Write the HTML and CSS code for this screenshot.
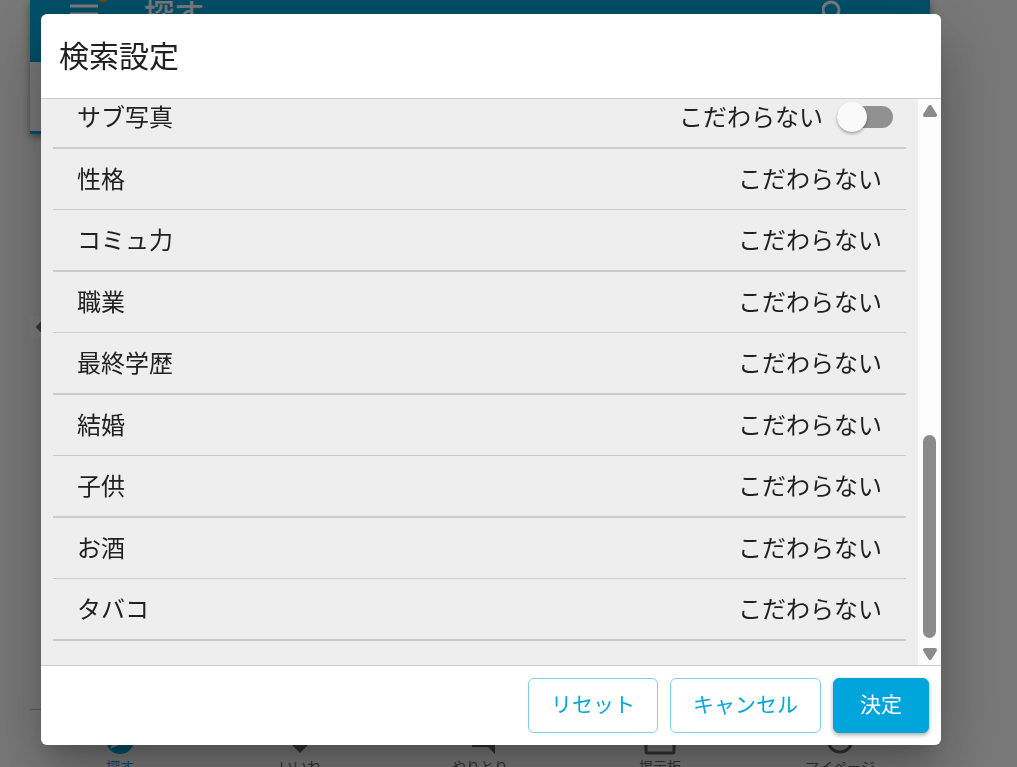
FILE: index.html
```
<!DOCTYPE html>
<html lang="ja">
<head>
<meta charset="utf-8">
<title>検索設定</title>
<link rel="stylesheet" href="styles.css">
</head>
<body>
<div class="app">
  <header class="topbar">
    <span class="menu"><svg width="36" height="28" viewBox="0 0 36 28"><path d="M4 6h28M4 14h28M4 22h28" stroke="#fff" stroke-width="3"/><circle cx="37" cy="-4" r="6" fill="#f90"/></svg></span>
    <span class="topbar-title">探す</span>
    <svg width="28" height="28" viewBox="0 0 28 28"><circle cx="9" cy="10" r="8" fill="none" stroke="#fff" stroke-width="3"/><path d="M15 16l9 9" stroke="#fff" stroke-width="3"/></svg>
  </header>
  <div class="tabs"></div>
  <main class="content">
    <span class="handle"><svg width="11" height="22" viewBox="0 0 11 22"><path d="M7 11l4-4v8z" fill="#777" stroke="#777" stroke-width="2" stroke-linejoin="round"/></svg></span>
  </main>
  <nav class="bottom">
    <a class="tab tab-active" href="#"><svg width="36" height="36" viewBox="0 0 36 36"><circle cx="18" cy="20" r="14" fill="currentColor"/><path d="M8 29l6-13 13-6-6 13z" fill="#eee"/></svg>探す</a>
    <a class="tab" href="#"><svg width="36" height="36" viewBox="0 0 36 36"><path d="M18 33L5 20C-1 11 11 1 18 11c7-10 19 0 13 9z" fill="currentColor"/></svg>いいね</a>
    <a class="tab" href="#"><svg width="36" height="36" viewBox="0 0 36 36"><path d="M3 4h24v16H3zM30 9h3v25l-7-7H10v-4h20z" fill="currentColor"/></svg>やりとり</a>
    <a class="tab" href="#"><svg width="36" height="36" viewBox="0 0 36 36"><rect x="4" y="6" width="28" height="27" rx="2" fill="none" stroke="currentColor" stroke-width="3"/></svg>掲示板</a>
    <a class="tab" href="#"><svg width="36" height="36" viewBox="0 0 36 36"><circle cx="18" cy="20" r="12" fill="none" stroke="currentColor" stroke-width="3"/></svg>マイページ</a>
  </nav>
</div>

<div class="backdrop">
  <section class="dialog" role="dialog" aria-labelledby="title">
    <h1 class="title" id="title">検索設定</h1>
    <div class="body">
      <div class="list">
        <div class="row row-switch"><label class="name" for="photo">サブ写真</label><span class="value">こだわらない</span><input class="switch" type="checkbox" id="photo"></div>
        <div class="row"><span class="name">性格</span><span class="value">こだわらない</span></div>
        <div class="row"><span class="name">コミュ力</span><span class="value">こだわらない</span></div>
        <div class="row"><span class="name">職業</span><span class="value">こだわらない</span></div>
        <div class="row"><span class="name">最終学歴</span><span class="value">こだわらない</span></div>
        <div class="row"><span class="name">結婚</span><span class="value">こだわらない</span></div>
        <div class="row"><span class="name">子供</span><span class="value">こだわらない</span></div>
        <div class="row"><span class="name">お酒</span><span class="value">こだわらない</span></div>
        <div class="row"><span class="name">タバコ</span><span class="value">こだわらない</span></div>
      </div>
      <div class="scrollbar" aria-hidden="true">
        <svg width="16" height="12" viewBox="0 0 16 12"><path d="M8 2L13 10H3z" fill="#8b8b8b" stroke="#8b8b8b" stroke-width="4" stroke-linejoin="round"/></svg>
        <div class="track"><div class="thumb"></div></div>
        <svg width="16" height="12" viewBox="0 0 16 12"><path d="M8 10L3 2h10z" fill="#8b8b8b" stroke="#8b8b8b" stroke-width="4" stroke-linejoin="round"/></svg>
      </div>
    </div>
    <footer class="actions">
      <button class="btn" type="button">リセット</button>
      <button class="btn" type="button">キャンセル</button>
      <button class="btn btn-primary" type="button">決定</button>
    </footer>
  </section>
</div>
</body>
</html>
```
FILE: styles.css
```
* { box-sizing: border-box; }
body {
  margin: 0;
  background: #fafafa;
  color: #212121;
  font-family: "Noto Sans CJK JP", sans-serif;
  overflow: hidden;
}
svg { display: block; flex: none; }

.app {
  display: flex;
  flex-direction: column;
  height: 100vh;
  margin: 0 87px 0 30px;
}
.topbar {
  display: flex;
  align-items: flex-start;
  height: 62px;
  padding: 0 80px 0 36px;
  background: #00a6db;
  color: #fff;
  box-shadow: 0 3px 8px rgba(0, 0, 0, .4);
}
.menu svg { overflow: visible; }
.topbar-title {
  flex: 1;
  padding-left: 42px;
  font-size: 30px;
  font-weight: 500;
  line-height: 24px;
}
.tabs {
  height: 72px;
  border-bottom: 3px solid #00a6db;
  background: #fafafa;
  box-shadow: 0 3px 8px rgba(0, 0, 0, .4);
}
.content {
  display: flex;
  flex: 1;
  align-items: flex-start;
  padding-top: 182px;
}
.handle { background: #fff; }
.bottom {
  display: grid;
  grid-template-columns: repeat(5, 1fr);
  height: 58px;
  border-top: 1px solid #bbb;
  background: #fafafa;
}
.tab {
  display: flex;
  flex-direction: column;
  align-items: center;
  padding-top: 10px;
  color: #666;
  font-size: 14px;
  line-height: 20px;
  text-decoration: none;
}
.tab-active { color: #00a6db; }

.backdrop {
  position: fixed;
  inset: 0;
  display: flex;
  padding: 14px 76px 22px 41px;
  background: rgba(0, 0, 0, .52);
}
.dialog {
  display: flex;
  flex: 1;
  flex-direction: column;
  border-radius: 6px;
  background: #fff;
  overflow: hidden;
  box-shadow: 0 16px 22px -10px rgba(0, 0, 0, .2),
    0 36px 57px 4px rgba(0, 0, 0, .14),
    0 14px 69px 12px rgba(0, 0, 0, .12);
}
.title {
  margin: 0;
  padding: 18px 18px 22px;
  font-size: 30px;
  font-weight: 400;
  line-height: 44px;
}
.body {
  display: flex;
  flex: 1;
  min-height: 0;
  border-top: 1px solid #ccc;
  border-bottom: 1px solid #ccc;
  background: #eee;
}
.list {
  display: flex;
  flex: 1;
  flex-direction: column;
  justify-content: flex-end;
  padding: 0 12px 24px;
  overflow: hidden;
}
.row {
  display: flex;
  flex: none;
  align-items: center;
  padding: 0 24px;
  border-bottom: 1px solid #ccc;
  font-size: 24px;
  line-height: 58px;
}
.row:nth-child(odd) { border-bottom-width: 2px; }
.row-switch { padding-right: 13px; }
.name, .value { padding-bottom: 2px; }
.value { margin-left: auto; }
.switch {
  display: flex;
  align-items: center;
  appearance: none;
  width: 56px;
  height: 22px;
  margin: 0 0 0 14px;
  border-radius: 11px;
  background: #919191;
}
.switch::before {
  content: "";
  width: 30px;
  height: 30px;
  border-radius: 50%;
  background: #fafafa;
  box-shadow: 0 2px 3px rgba(0, 0, 0, .3);
}
.scrollbar {
  display: flex;
  flex-direction: column;
  align-items: center;
  width: 23px;
  padding: 6px 0 5px;
  background: #fcfcfc;
}
.track {
  display: flex;
  flex: 1;
  flex-direction: column;
  justify-content: flex-end;
  padding-bottom: 10px;
}
.thumb {
  width: 13px;
  height: 39%;
  border-radius: 7px;
  background: #8b8b8b;
}
.actions {
  display: flex;
  justify-content: flex-end;
  gap: 12px;
  padding: 12px;
}
.btn {
  padding: 0 22px 4px;
  border: 1px solid #80cfe8;
  border-radius: 6px;
  background: #fff;
  color: #00a6db;
  font: 400 21px/49px "Noto Sans CJK JP", sans-serif;
}
.btn-primary {
  padding: 0 26px 4px;
  border-color: #00a6db;
  background: #00a6db;
  color: #fff;
  box-shadow: 0 2px 4px rgba(0, 0, 0, .35);
}
```
